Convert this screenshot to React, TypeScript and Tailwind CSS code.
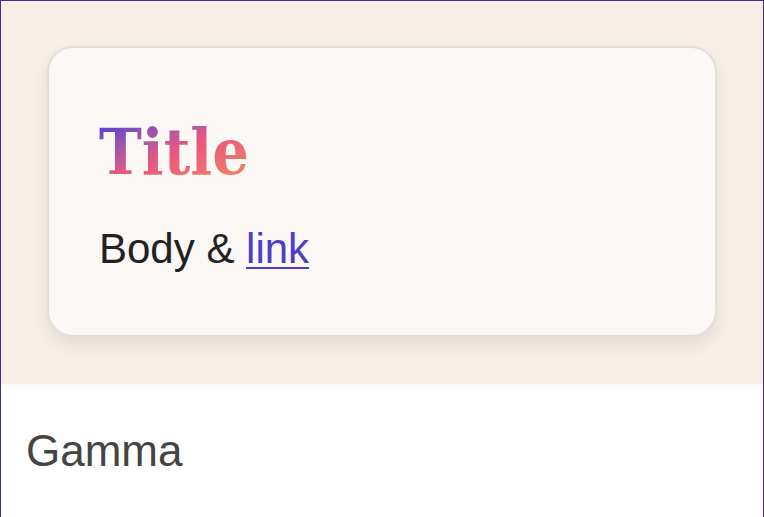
import React from "react";

export default function App() {
  return (
    <div className="min-h-[560px] border-x border-t border-[#4b2a96] bg-white">
      <div className="relative z-10 bg-[#f7efe6] px-[46px] pt-[45px] pb-[47px] shadow-[0_4px_6px_rgba(0,0,0,0.025)]">
        <div className="rounded-[26px] border-2 border-[#e2dedb] bg-[#fcf8f5] px-[50px] pt-[72px] pb-[65px] shadow-[0_8px_18px_rgba(0,0,0,0.08)]">
          <h1
            className="inline-block bg-gradient-to-br from-[#4a2fd6] via-[#e8567e] to-[#f4875a] bg-clip-text text-[64px] font-bold leading-none text-transparent"
            style={{ fontFamily: '"DejaVu Serif Condensed", "DejaVu Serif", serif', fontStretch: "condensed" }}
          >
            Title
          </h1>
          <p
            className="mt-[44px] text-[42px] leading-none text-[#222222]"
            style={{ fontFamily: '"Liberation Sans", Arial, sans-serif' }}
          >
            Body &amp;{" "}
            <a href="#" className="text-[#4f3cc9] underline decoration-2 underline-offset-[4px]">
              link
            </a>
          </p>
        </div>
      </div>
      <div className="px-[25px] pt-[45px]">
        <p
          className="text-[44px] leading-none text-[#444444]"
          style={{ fontFamily: '"Liberation Sans", Arial, sans-serif' }}
        >
          Gamma
        </p>
      </div>
    </div>
  );
}
